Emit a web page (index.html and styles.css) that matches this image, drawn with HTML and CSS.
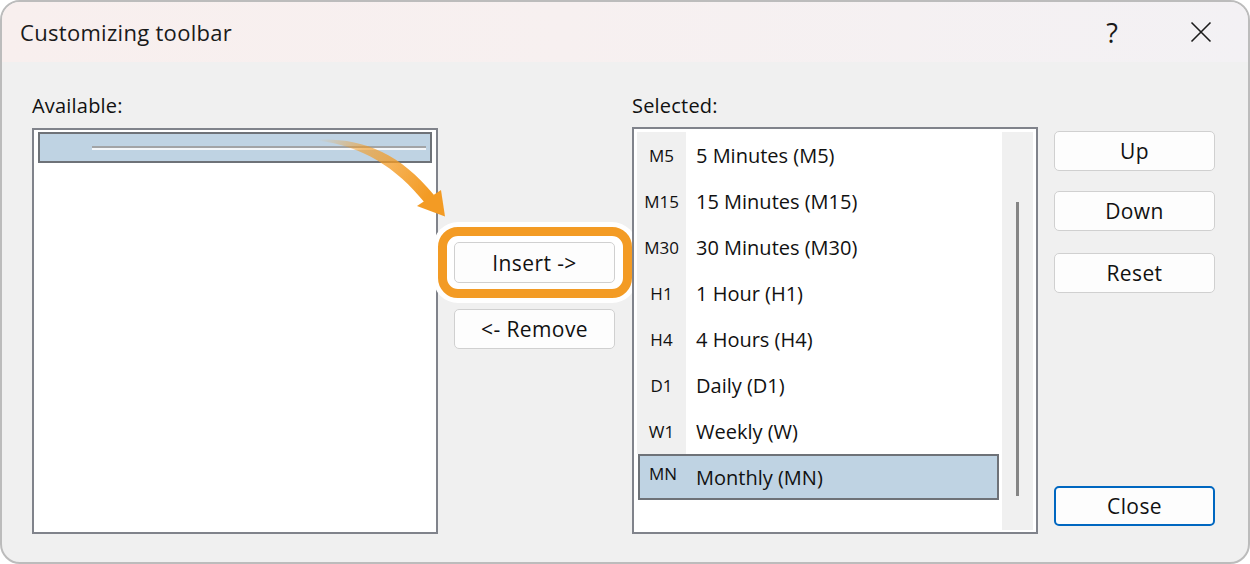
FILE: index.html
```html
<!DOCTYPE html>
<html lang="en">
<head>
<meta charset="utf-8">
<title>Customizing toolbar</title>
<link rel="stylesheet" href="styles.css">
</head>
<body>
<div class="window">
  <div class="titlebar">
    <span class="title">Customizing toolbar</span>
    <div class="caption-btns">
      <span class="cap-btn help">?</span>
      <span class="cap-btn close-x">
        <svg width="22" height="22" viewBox="0 0 22 22"><path d="M1.5 1.5 L20.5 20.5 M20.5 1.5 L1.5 20.5" stroke="#1c1c1c" stroke-width="1.6" fill="none"/></svg>
      </span>
    </div>
  </div>
  <div class="content">
    <div class="panel">
      <div class="label">Available:</div>
      <div class="listbox avail-list">
        <div class="avail-item"><div class="separator"></div></div>
      </div>
    </div>
    <div class="middle">
      <div class="highlight"><button class="btn insert">Insert -&gt;</button></div>
      <button class="btn remove">&lt;- Remove</button>
    </div>
    <div class="panel">
      <div class="label">Selected:</div>
      <div class="listbox sel-list">
        <div class="rows">
          <div class="row"><span class="code">M5</span><span class="name">5 Minutes (M5)</span></div>
          <div class="row"><span class="code">M15</span><span class="name">15 Minutes (M15)</span></div>
          <div class="row"><span class="code">M30</span><span class="name">30 Minutes (M30)</span></div>
          <div class="row"><span class="code">H1</span><span class="name">1 Hour (H1)</span></div>
          <div class="row"><span class="code">H4</span><span class="name">4 Hours (H4)</span></div>
          <div class="row"><span class="code">D1</span><span class="name">Daily (D1)</span></div>
          <div class="row"><span class="code">W1</span><span class="name">Weekly (W)</span></div>
          <div class="row selected"><span class="code">MN</span><span class="name">Monthly (MN)</span></div>
        </div>
        <div class="scrollbar"><div class="thumb"></div></div>
      </div>
    </div>
    <div class="side-btns">
      <button class="btn up">Up</button>
      <button class="btn down">Down</button>
      <button class="btn reset">Reset</button>
      <button class="btn close-btn">Close</button>
    </div>
  </div>
  <svg class="arrow" width="1250" height="564" viewBox="0 0 1250 564">
    <defs>
      <linearGradient id="ag" gradientUnits="userSpaceOnUse" x1="318" y1="140" x2="425" y2="200">
        <stop offset="0" stop-color="#f39b24" stop-opacity="0"/>
        <stop offset="0.35" stop-color="#f39b24" stop-opacity="0.6"/>
        <stop offset="1" stop-color="#f39b24" stop-opacity="1"/>
      </linearGradient>
    </defs>
    <path d="M318 139.5 C362 138 399 152 434 195 L425 203 C396 167 362 146 318 140.5 Z" fill="url(#ag)"/>
    <path d="M417 206 L441 190 L445 216.5 Z" fill="#f39b24"/>
  </svg>
</div>
</body>
</html>
```
FILE: styles.css
```css
html, body {
  margin: 0;
  padding: 0;
  background: #ffffff;
}
body {
  font-family: "Open Sans", "Noto Sans", sans-serif;
  color: #111111;
}
.window {
  position: relative;
  box-sizing: border-box;
  width: 1250px;
  height: 564px;
  border: 2px solid #bcbcbc;
  border-radius: 20px;
  background: #f0f0f0;
  overflow: hidden;
}
.titlebar {
  height: 60px;
  display: flex;
  align-items: center;
  justify-content: space-between;
  padding-left: 18px;
  background: linear-gradient(90deg, #f8efee 0%, #f7f0f0 45%, #f3f1f4 100%);
}
.title {
  font-size: 22px;
  letter-spacing: 0.3px;
  color: #1a1a1a;
}
.caption-btns {
  display: flex;
  align-items: center;
  gap: 43px;
  padding-right: 24px;
}
.cap-btn {
  width: 46px;
  height: 40px;
  display: flex;
  align-items: center;
  justify-content: center;
}
.help {
  font-size: 27px;
  font-weight: 400;
  color: #1a1a1a;
}
.content {
  display: flex;
  align-items: flex-start;
  padding: 31px 0 0 30px;
}
.panel {
  width: 406px;
  display: flex;
  flex-direction: column;
}
.label {
  height: 26px;
  line-height: 26px;
  font-size: 20px;
  letter-spacing: 0.2px;
  color: #111111;
}
.listbox {
  box-sizing: border-box;
  border: 2px solid #80838b;
  background: #ffffff;
}
.avail-list {
  margin-top: 9px;
  height: 406px;
  padding: 2px 4px;
}
.avail-item {
  box-sizing: border-box;
  height: 31px;
  border: 2px solid #6e7278;
  background: #bfd3e3;
  padding: 12px 4px 0 52px;
}
.separator {
  border-top: 2px solid #a2a4a6;
  border-bottom: 2px solid #f4f7fa;
}
.middle {
  width: 194px;
  display: flex;
  flex-direction: column;
  align-items: flex-start;
  padding-top: 134px;
}
.highlight {
  border: 9px solid #f39b24;
  border-radius: 20px;
  background: #ffffff;
  padding: 6px 8px 6px 7px;
  box-shadow: 0 0 0 5px #ffffff;
}
.btn {
  box-sizing: border-box;
  width: 161px;
  height: 40px;
  padding: 0;
  margin: 0;
  border: 1px solid #d0d0d0;
  border-radius: 5px;
  background: #fdfdfd;
  font-family: "Open Sans", "Noto Sans", sans-serif;
  font-size: 21px;
  letter-spacing: 0.4px;
  color: #111111;
}
.insert {
  display: block;
  height: 41px;
}
.remove {
  margin-top: 11px;
  margin-left: 16px;
}
.sel-list {
  margin-top: 8px;
  height: 407px;
  padding: 3px 3px 2px 3px;
  display: flex;
}
.rows {
  width: 365px;
  display: flex;
  flex-direction: column;
}
.row {
  width: 362px;
  height: 46px;
  display: flex;
  align-items: center;
}
.code {
  width: 49px;
  height: 100%;
  display: flex;
  align-items: center;
  justify-content: center;
  background: #f0f0f0;
  font-size: 17px;
  color: #111111;
}
.name {
  padding-left: 10px;
  font-size: 20px;
  color: #111111;
}
.row.selected {
  box-sizing: border-box;
  width: 361px;
  margin-left: 1px;
  border: 2px solid #6e7278;
  background: #bfd3e3;
}
.row.selected .code {
  width: 46px;
  background: transparent;
  align-items: flex-start;
  padding-top: 6px;
  box-sizing: border-box;
}
.row.selected .name {
  padding-left: 10px;
}
.scrollbar {
  width: 31px;
  height: 398px;
  background: #f0f0f0;
  box-sizing: border-box;
  padding: 70px 0 0 14px;
}
.thumb {
  width: 3px;
  height: 294px;
  background: #858585;
}
.side-btns {
  margin-left: 16px;
  width: 161px;
  display: flex;
  flex-direction: column;
  padding-top: 38px;
}
.down {
  margin-top: 20px;
}
.reset {
  margin-top: 22px;
}
.close-btn {
  margin-top: 193px;
  border: 2px solid #0067c0;
}
.arrow {
  position: absolute;
  left: -2px;
  top: -2px;
  pointer-events: none;
}
```
